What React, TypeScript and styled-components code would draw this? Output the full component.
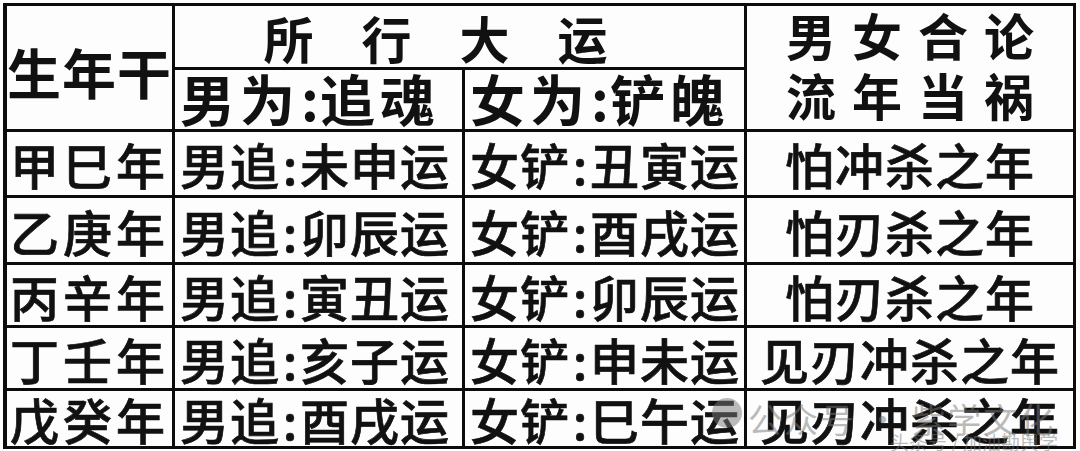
import React, { FC } from "react"
import styled, { createGlobalStyle } from "styled-components"

const GlobalStyle = createGlobalStyle`
  html, body {
    margin: 0;
    padding: 0;
    background: #fff;
  }
  body {
    font-family: "Noto Sans CJK SC", "Noto Sans", sans-serif;
    color: #111;
  }
`

interface Row {
  gan: string
  male: string
  female: string
  note: string
}

const rows: Row[] = [
  { gan: "甲巳年", male: "未申运", female: "丑寅运", note: "怕冲杀之年" },
  { gan: "乙庚年", male: "卯辰运", female: "酉戌运", note: "怕刃杀之年" },
  { gan: "丙辛年", male: "寅丑运", female: "卯辰运", note: "怕刃杀之年" },
  { gan: "丁壬年", male: "亥子运", female: "申未运", note: "见刃冲杀之年" },
  { gan: "戊癸年", male: "酉戌运", female: "巳午运", note: "见刃冲杀之年" },
]

const App: FC = () => {
  return (
    <Page>
      <GlobalStyle />
      <Table>
        <HeadCell $area="gan" $size={54} $shift={8}>
          生年干
        </HeadCell>
        <HeadCell $area="yun" $spacing={48} $size={50}>
          所行大运
        </HeadCell>
        <HeadCell $area="note" $spacing={16} $size={50} $shift={-8}>
          <Stack>
            <span>男女合论</span>
            <span>流年当祸</span>
          </Stack>
        </HeadCell>
        <HeadCell $area="male" $size={55} $spacing={5} $align="left" $shift={-5}>
          男为<Colon>:</Colon>追魂
        </HeadCell>
        <HeadCell $area="female" $size={55} $spacing={5} $align="left" $shift={-5}>
          女为<Colon>:</Colon>铲魄
        </HeadCell>
        {rows.map(row => (
          <React.Fragment key={row.gan}>
            <Cell $spacing={4}>{row.gan}</Cell>
            <Cell $align="left">
              男追<Colon>:</Colon>
              {row.male}
            </Cell>
            <Cell $align="left">
              女铲<Colon>:</Colon>
              {row.female}
            </Cell>
            <Cell>{row.note}</Cell>
          </React.Fragment>
        ))}
      </Table>
      <Watermark>
        <Badge />
        <MarkMain>公众号 · 紫学文化</MarkMain>
        <MarkSub>头条号 / 加油勘舆学</MarkSub>
      </Watermark>
    </Page>
  )
}

const Page = styled.div`
  position: relative;
  width: 1080px;
  height: 451px;
  padding: 3px 0 0 3px;
  box-sizing: border-box;
  overflow: hidden;
  background: #fff;
`

const Table = styled.div`
  display: grid;
  width: 1073px;
  box-sizing: border-box;
  grid-template-columns: 165px 287px 279px 1fr;
  grid-template-rows: 61px 59px 63px 64px 60px 60px 55px;
  grid-template-areas:
    "gan yun yun note"
    "gan male female note";
  gap: 3px;
  padding: 3px 3px 3px 4px;
  background: #0c0c0c;
`

const Cell = styled.div<{
  $align?: "left" | "center"
  $spacing?: number
  $area?: string
  $shift?: number
}>`
  display: flex;
  align-items: center;
  justify-content: ${p => (p.$align === "left" ? "flex-start" : "center")};
  padding-left: ${p => (p.$align === "left" ? "5px" : "0")};
  padding-top: ${p => Math.max(p.$shift ?? 0, 0)}px;
  padding-bottom: ${p => Math.max(-(p.$shift ?? 0), 0)}px;
  box-sizing: border-box;
  background: #fdfdfd;
  font-size: 49px;
  font-weight: 500;
  -webkit-text-stroke: 0.7px #111;
  line-height: 1;
  letter-spacing: ${p => p.$spacing ?? 1}px;
  white-space: nowrap;
  ${p => (p.$area ? `grid-area: ${p.$area};` : "")}
`

const HeadCell = styled(Cell)<{ $size: number }>`
  font-size: ${p => p.$size}px;
  font-weight: 700;
  -webkit-text-stroke: 0;
`

const Stack = styled.div`
  display: flex;
  flex-direction: column;
  align-items: center;
  gap: 10px;
  margin-right: -16px;
`

const Colon = styled.span`
  display: inline-block;
  width: 20px;
  text-align: center;
  letter-spacing: 0;
`

const Watermark = styled.div`
  position: absolute;
  left: 712px;
  top: 392px;
  width: 370px;
  height: 59px;
  color: rgba(120, 120, 120, 0.5);
  font-family: "Noto Sans CJK SC", sans-serif;
  pointer-events: none;
`

const Badge = styled.div`
  position: absolute;
  left: 0;
  top: 6px;
  width: 30px;
  height: 30px;
  border-radius: 50%;
  background: rgba(120, 120, 120, 0.5);
`

const MarkMain = styled.div`
  position: absolute;
  left: 36px;
  top: 2px;
  font-size: 34px;
  letter-spacing: 2px;
  white-space: nowrap;
`

const MarkSub = styled.div`
  position: absolute;
  left: 178px;
  top: 36px;
  font-size: 19px;
  white-space: nowrap;
`

export default App
